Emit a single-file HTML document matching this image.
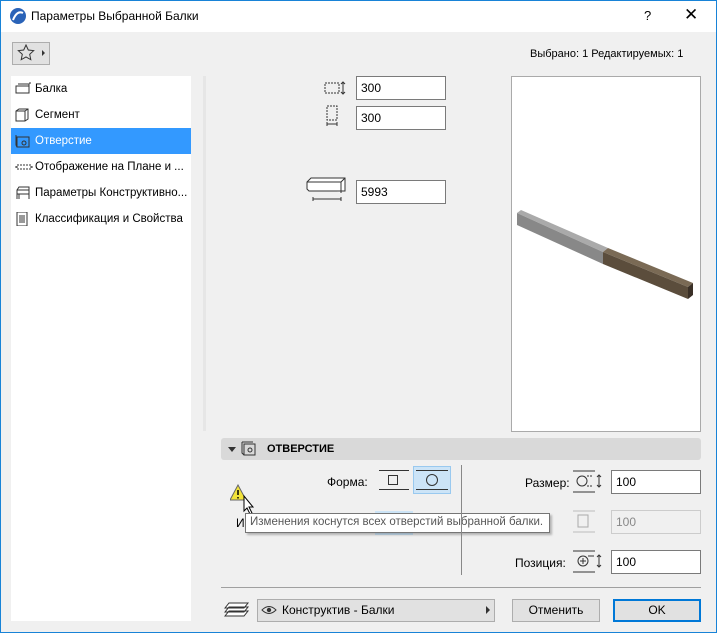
<!DOCTYPE html>
<html><head><meta charset="utf-8"><style>
*{box-sizing:border-box;margin:0;padding:0}
body{width:717px;height:633px;background:#f0f0f0;font-family:"Liberation Sans",sans-serif;font-size:12px;color:#000;position:relative;overflow:hidden}
.a{position:absolute}
.title{left:0;top:0;width:717px;height:32px;background:#fff}
.inp{position:absolute;height:24px;background:#fff;border:1px solid #7a7a7a;padding:4px 4px;font-size:12px}
.side div{height:26px;line-height:26px;padding-left:24px;position:relative}
.side svg{position:absolute;left:4px;top:6px}
.btn{position:absolute;border:1px solid #adadad;background:#e1e1e1;text-align:center;line-height:20px}
</style></head><body>
<div class="a" style="left:0;top:0;width:717px;height:633px;border:1px solid #1883d7;z-index:9"></div>
<div class="a title"></div>
<svg class="a" style="left:9px;top:7px" width="18" height="18"><circle cx="9" cy="9" r="8" fill="#2a63b8"/><path d="M4 13 Q8 3 14 6" stroke="#fff" stroke-width="2" fill="none"/></svg>
<div class="a" style="left:31px;top:9px;font-size:12px">Параметры Выбранной Балки</div>
<div class="a" style="left:644px;top:8px;font-size:13px">?</div>
<div class="a" style="left:684px;top:5px;font-size:17px">✕</div>
<div class="a" style="left:12px;top:42px;width:38px;height:23px;border:1px solid #adadad;background:#e1e1e1"></div>
<svg class="a" style="left:17px;top:44px" width="30" height="18"><path d="M9 1l2.3 5 5.4.6-4 3.7 1.1 5.4L9 13l-4.8 2.7 1.1-5.4-4-3.7 5.4-.6z" fill="none" stroke="#333"/><path d="M25 6v6l3-3z" fill="#333"/></svg>
<div class="a" style="left:530px;top:48px;font-size:11px">Выбрано: 1 Редактируемых: 1</div>
<div class="a side" style="left:11px;top:76px;width:180px;height:545px;background:#fff;font-size:11.5px">
<div><svg width="18" height="14"><rect x="1" y="4" width="13" height="7" fill="none" stroke="#333"/><path d="M3 2h11v2M14 1l2 0" stroke="#333" fill="none"/></svg>Балка</div>
<div><svg width="16" height="14"><path d="M1 3l3-2h9v10l-3 2H1z M1 3h9v10 M10 3l3-2" fill="none" stroke="#333"/></svg>Сегмент</div>
<div style="background:#3399ff;color:#fff"><svg width="16" height="14"><rect x="2" y="3" width="12" height="10" fill="none" stroke="#333"/><path d="M1 1v10l1 2" stroke="#333" fill="none"/><circle cx="9" cy="9" r="2" fill="none" stroke="#333"/></svg>Отверстие</div>
<div><svg width="18" height="14"><path d="M0 7h2 M16 7h2" stroke="#333"/><rect x="2" y="5" width="14" height="4" fill="none" stroke="#333" stroke-dasharray="2 1"/></svg>Отображение на Плане и ...</div>
<div><svg width="16" height="14"><path d="M2 13V4l2-3h10v12 M2 4h12 M2 8h12 M4 8v5" fill="none" stroke="#333"/></svg>Параметры Конструктивно...</div>
<div><svg width="16" height="14"><rect x="2" y="0" width="10" height="14" fill="none" stroke="#333"/><path d="M4 4h6M4 6h6M4 8h6M4 10h6" stroke="#333"/></svg>Классификация и Свойства</div>
</div>
<div class="a" style="left:203px;top:76px;width:3px;height:355px;background:#e6e6e6"></div>
<svg class="a" style="left:324px;top:79px" width="24" height="52"><rect x="1" y="4" width="14" height="10" fill="none" stroke="#333" stroke-dasharray="2 1"/><path d="M19 3v12M17 5l2-2 2 2M17 13l2 2 2-2" stroke="#333" fill="none"/><rect x="3" y="27" width="10" height="14" fill="none" stroke="#333" stroke-dasharray="2 1"/><path d="M3 45h10M3 43v4M13 43v4" stroke="#333"/></svg>
<div class="inp" style="left:356px;top:76px;width:90px">300</div>
<div class="inp" style="left:356px;top:106px;width:90px">300</div>
<svg class="a" style="left:305px;top:176px" width="42" height="26"><path d="M2 6l4-4h34v13h-36l-2-2z M2 6h34v11 M36 6l4-4" fill="#fff" stroke="#333"/><path d="M8 23h28M8 21v4M36 21v4" stroke="#333"/></svg>
<div class="inp" style="left:356px;top:180px;width:90px">5993</div>
<div class="a" style="left:511px;top:76px;width:190px;height:356px;background:#fff;border:1px solid #aaa"></div>
<svg class="a" style="left:511px;top:76px" width="190" height="356"><polygon points="6,137 10,134 97,172 92,176" fill="#aaa"/><polygon points="6,137 92,176 92,188 6,149" fill="#888"/><polygon points="92,176 97,172 182,207 177,211" fill="#7a6a55"/><polygon points="92,176 177,211 177,223 92,188" fill="#5b4d3c"/><polygon points="177,211 182,207 182,219 177,223" fill="#3a3027"/></svg>
<div class="a" style="left:221px;top:438px;width:480px;height:22px;background:#d9d9d9;border-radius:3px"></div>
<div class="a" style="left:228px;top:447px;border-top:5px solid #333;border-left:4px solid transparent;border-right:4px solid transparent"></div>
<svg class="a" style="left:240px;top:441px" width="18" height="16"><rect x="4" y="3" width="11" height="11" fill="none" stroke="#333"/><path d="M2 1v11l2 2M2 1h11" stroke="#333" fill="none"/><circle cx="10" cy="9" r="2" fill="none" stroke="#333"/></svg>
<div class="a" style="left:267px;top:443px;font-weight:bold;font-size:11px">ОТВЕРСТИЕ</div>
<div class="a" style="left:327px;top:475px">Форма:</div>
<div class="a" style="left:379px;top:470px;width:30px;height:20px;border-top:1px solid #333;border-bottom:1px solid #333"></div>
<div class="a" style="left:388px;top:475px;width:10px;height:10px;border:1px solid #333"></div>
<div class="a" style="left:413px;top:466px;width:38px;height:28px;background:#cce4f7;border:1px solid #99c9ef"></div>
<div class="a" style="left:416px;top:470px;width:32px;height:20px;border-top:1px solid #333;border-bottom:1px solid #333"></div>
<div class="a" style="left:426px;top:474px;width:12px;height:12px;border:1px solid #333;border-radius:50%"></div>
<div class="a" style="left:375px;top:511px;width:38px;height:24px;background:#cce4f7"></div>
<svg class="a" style="left:230px;top:484px" width="30" height="36"><polygon points="8,1 16,16 0,16" fill="#f2e33a" stroke="#666"/><path d="M8 6v5M8 13v1.5" stroke="#000" stroke-width="1.5"/><path d="M14 12v15l3-3 3 6 2-1-3-6h4z" fill="#fff" stroke="#000"/></svg>
<div class="a" style="left:236px;top:516px">И</div>
<div class="a" style="left:245px;top:513px;width:305px;height:20px;background:#fff;border:1px solid #767676;padding:2px 4px;color:#575757;white-space:nowrap;font-size:11.5px;box-shadow:2px 2px 2px rgba(0,0,0,.25)">Изменения коснутся всех отверстий выбранной балки.</div>
<div class="a" style="left:461px;top:465px;width:1px;height:110px;background:#888"></div>
<div class="a" style="left:525px;top:476px">Размер:</div>
<div class="a" style="left:515px;top:556px">Позиция:</div>
<svg class="a" style="left:572px;top:470px" width="36" height="110"><path d="M1 1h22M1 22h22" stroke="#333"/><circle cx="10" cy="11" r="5" fill="none" stroke="#333"/><path d="M15 6h6M15 16h6" stroke="#333" stroke-dasharray="2 1"/><path d="M27 5v12M25 7l2-2 2 2M25 15l2 2 2-2" stroke="#333" fill="none"/><path d="M1 41h22M1 62h22" stroke="#bbb"/><rect x="6" y="45" width="10" height="12" fill="none" stroke="#aaa"/><path d="M1 81h22M1 102h22" stroke="#333"/><circle cx="11" cy="91" r="5" fill="none" stroke="#333"/><path d="M8 91h6M11 88v6M16 86h6" stroke="#333"/><path d="M27 85v12M25 87l2-2 2 2M25 95l2 2 2-2" stroke="#333" fill="none"/></svg>
<div class="inp" style="left:611px;top:470px;width:90px">100</div>
<div class="inp" style="left:611px;top:510px;width:90px;background:#f0f0f0;border-color:#ccc;color:#888">100</div>
<div class="inp" style="left:611px;top:550px;width:90px">100</div>
<div class="a" style="left:221px;top:587px;width:480px;height:1px;background:#a0a0a0"></div>
<svg class="a" style="left:224px;top:601px" width="26" height="18"><path d="M5 2h19l-4 5H1zM5 6h19l-4 5H1zM5 10h19l-4 5H1z" fill="#fff" stroke="#333"/></svg>
<div class="btn" style="left:257px;top:599px;width:238px;height:23px;text-align:left;padding-left:24px">Конструктив - Балки</div>
<svg class="a" style="left:261px;top:604px" width="18" height="12"><path d="M1 6Q8 -1 15 6Q8 13 1 6z" fill="none" stroke="#333"/><circle cx="8" cy="6" r="2.2" fill="#333"/></svg>
<div class="a" style="left:486px;top:606px;border-left:4px solid #333;border-top:4px solid transparent;border-bottom:4px solid transparent"></div>
<div class="btn" style="left:512px;top:599px;width:88px;height:23px">Отменить</div>
<div class="btn" style="left:613px;top:599px;width:88px;height:23px;border:2px solid #0078d7;line-height:19px">OK</div>
</body></html>
